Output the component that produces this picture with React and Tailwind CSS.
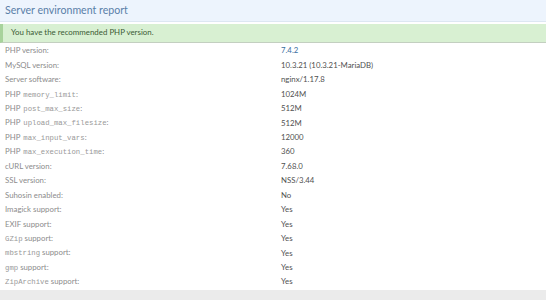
const ROWS = [
  { label: "PHP version:", value: "7.4.2", link: true },
  { label: "MySQL version:", value: "10.3.21 (10.3.21-MariaDB)" },
  { label: "Server software:", value: "nginx/1.17.8" },
  { label: ["PHP", "memory_limit", ":"], value: "1024M" },
  { label: ["PHP", "post_max_size", ":"], value: "512M" },
  { label: ["PHP", "upload_max_filesize", ":"], value: "512M" },
  { label: ["PHP", "max_input_vars", ":"], value: "12000" },
  { label: ["PHP", "max_execution_time", ":"], value: "360" },
  { label: "cURL version:", value: "7.68.0" },
  { label: "SSL version:", value: "NSS/3.44" },
  { label: "Suhosin enabled:", value: "No" },
  { label: "Imagick support:", value: "Yes" },
  { label: "EXIF support:", value: "Yes" },
  { label: ["", "GZip", " support:"], value: "Yes" },
  { label: ["", "mbstring", " support:"], value: "Yes" },
  { label: ["", "gmp", " support:"], value: "Yes" },
  { label: ["", "ZipArchive", " support:"], value: "Yes" },
];

function Label({ label }) {
  if (typeof label === "string") return label;
  const [pre, code, post] = label;
  return (
    <>
      {pre && <span className="mr-[3px]">{pre}</span>}
      <code className="font-['Liberation_Mono',monospace] text-[7.3px] text-[#999]">{code}</code>
      {post}
    </>
  );
}

export default function App() {
  return (
    <div className="w-[546px] h-[300px] bg-white flex flex-col font-['Lato',sans-serif] overflow-hidden">
      <div className="h-[22px] shrink-0 bg-[#edf4fd] border-b border-[#dde7f2] flex items-center px-[5px]">
        <h2 className="text-[10.6px] text-[#5a7fa8] leading-none">Server environment report</h2>
      </div>
      <div className="h-[2px] shrink-0" />
      <div className="h-[19px] shrink-0 bg-[#d8f0d2] border-l-[3px] border-l-[#a8d39c] border-b border-b-[#c3cfc0] flex items-center pl-[8px]">
        <span className="text-[7.9px] text-[#3b5a34]">You have the recommended PHP version.</span>
      </div>
      <dl className="flex-1 pt-[1px] text-[7.8px]">
        {ROWS.map((r, i) => (
          <div key={i} className="h-[14.44px] flex items-center">
            <dt className="w-[281px] pl-[5px] text-[#8c8c8c]">
              <Label label={r.label} />
            </dt>
            <dd className={r.link ? "text-[#3a6ea0]" : "text-[#505050]"}>{r.value}</dd>
          </div>
        ))}
      </dl>
      <div className="h-[10px] shrink-0 bg-[#ebebeb]" />
    </div>
  );
}
